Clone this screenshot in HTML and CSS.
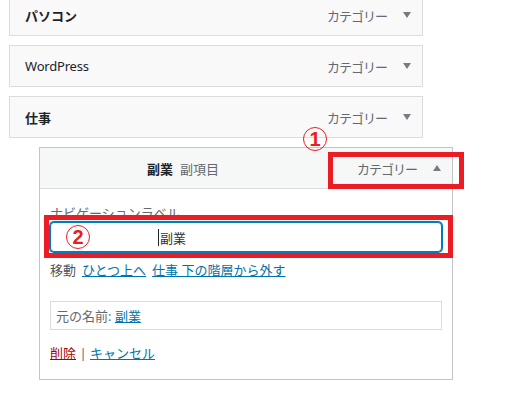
FILE: index.html
```html
<!DOCTYPE html>
<html lang="ja">
<head>
<meta charset="utf-8">
<link rel="stylesheet" href="styles.css">
</head>
<body>
<div class="menu">
  <div class="item">
    <span class="title">パソコン</span>
    <span class="type">カテゴリー</span>
    <span class="toggle"><svg width="8" height="6" viewBox="0 0 8 6"><polygon points="0,0 8,0 4,6" fill="#787c82"/></svg></span>
  </div>
  <div class="item">
    <span class="title latin">WordPress</span>
    <span class="type">カテゴリー</span>
    <span class="toggle"><svg width="8" height="6" viewBox="0 0 8 6"><polygon points="0,0 8,0 4,6" fill="#787c82"/></svg></span>
  </div>
  <div class="item">
    <span class="title">仕事</span>
    <span class="type">カテゴリー</span>
    <span class="toggle"><svg width="8" height="6" viewBox="0 0 8 6"><polygon points="0,0 8,0 4,6" fill="#787c82"/></svg></span>
  </div>
  <div class="item open">
    <div class="head">
      <span class="title">副業<span class="sub">副項目</span></span>
      <span class="type">カテゴリー</span>
      <span class="toggle"><svg width="8" height="6" viewBox="0 0 8 6"><polygon points="0,6 8,6 4,0" fill="#787c82"/></svg></span>
    </div>
    <div class="settings">
      <label class="label">ナビゲーションラベル</label>
      <div class="field"><span class="caret"></span>副業</div>
      <div class="move">
        <span>移動</span>
        <a href="#">ひとつ上へ</a>
        <a href="#">仕事 下の階層から外す</a>
      </div>
      <div class="orig">元の名前:&nbsp;<a href="#">副業</a></div>
      <div class="actions"><a href="#" class="del">削除</a> <span class="sep">|</span> <a href="#">キャンセル</a></div>
    </div>
  </div>
</div>
<div class="mark mark1"></div>
<div class="mark mark2"></div>
<span class="num num1">1</span>
<span class="num num2">2</span>
</body>
</html>
```
FILE: styles.css
```css
html, body {
  margin: 0;
  padding: 0;
  background: #fff;
  overflow: hidden;
}
body {
  font-family: "Noto Sans", "Noto Sans CJK JP", sans-serif;
  font-size: 13px;
  color: #3c434a;
  position: relative;
  width: 508px;
  height: 395px;
}
.menu {
  padding-left: 9px;
  margin-top: -6px;
}
.item {
  width: 414px;
  box-sizing: border-box;
  border: 1px solid #dcdcde;
  background: #f9f9f9;
  height: 42px;
  display: flex;
  align-items: center;
  padding-left: 15px;
  margin-bottom: 9px;
}
.title {
  flex: 1;
  font-weight: 700;
  color: #1d2327;
}
.title.latin {
  font-weight: 400;
  color: #1d2327;
  letter-spacing: -0.2px;
}
.type {
  color: #646970;
  margin-right: 5px;
  letter-spacing: -1px;
}
.toggle {
  width: 30px;
  height: 40px;
  display: flex;
  align-items: center;
  justify-content: center;
}
.item.open {
  margin-left: 30px;
  height: auto;
  display: block;
  padding-left: 0;
  background: #fff;
  border-color: #c3c4c7;
}
.head {
  height: 40px;
  display: flex;
  align-items: center;
  padding-left: 107px;
  background: #f6f7f7;
  border-bottom: 1px solid #dcdcde;
}
.sub {
  font-weight: 400;
  color: #646970;
  margin-left: 7px;
}
.settings {
  padding: 15px 10px 17px 10px;
}
.label {
  display: block;
  line-height: 18px;
  color: #646970;
}
.field {
  margin-top: 0;
  height: 30px;
  box-sizing: border-box;
  border: 1px solid #007cba;
  box-shadow: 0 0 0 1px #007cba;
  border-radius: 4px;
  display: flex;
  align-items: center;
  padding-left: 107px;
  color: #2c3338;
  background: #fff;
}
.caret {
  display: inline-block;
  width: 1px;
  height: 17px;
  background: #1d2327;
  margin-right: 1px;
}
.move {
  margin-top: 9px;
  line-height: 18px;
  display: flex;
  gap: 6px;
  color: #50575e;
}
a {
  color: #0073aa;
  text-decoration: underline;
}
.orig {
  margin-top: 22px;
  height: 29px;
  box-sizing: border-box;
  border: 1px solid #dcdcde;
  display: flex;
  align-items: center;
  padding-left: 5px;
  color: #646970;
}
.actions {
  margin-top: 14px;
  line-height: 18px;
  color: #646970;
}
.actions .del {
  color: #a00;
}
.sep {
  color: #646970;
}
.mark {
  position: absolute;
  border: 5px solid #ec1c24;
  box-sizing: border-box;
}
.mark1 {
  left: 328px;
  top: 152px;
  width: 136px;
  height: 37px;
}
.mark2 {
  left: 44px;
  top: 215px;
  width: 409px;
  height: 43px;
}
.num {
  position: absolute;
  width: 24px;
  height: 24px;
  box-sizing: border-box;
  border: 1px solid #ec1c24;
  border-radius: 50%;
  color: #ec1c24;
  font-family: "Liberation Sans", sans-serif;
  font-weight: 700;
  font-size: 20px;
  line-height: 22px;
  text-align: center;
  background: transparent;
}
.num1 {
  left: 303px;
  top: 127px;
}
.num2 {
  left: 66px;
  top: 225px;
}
```
